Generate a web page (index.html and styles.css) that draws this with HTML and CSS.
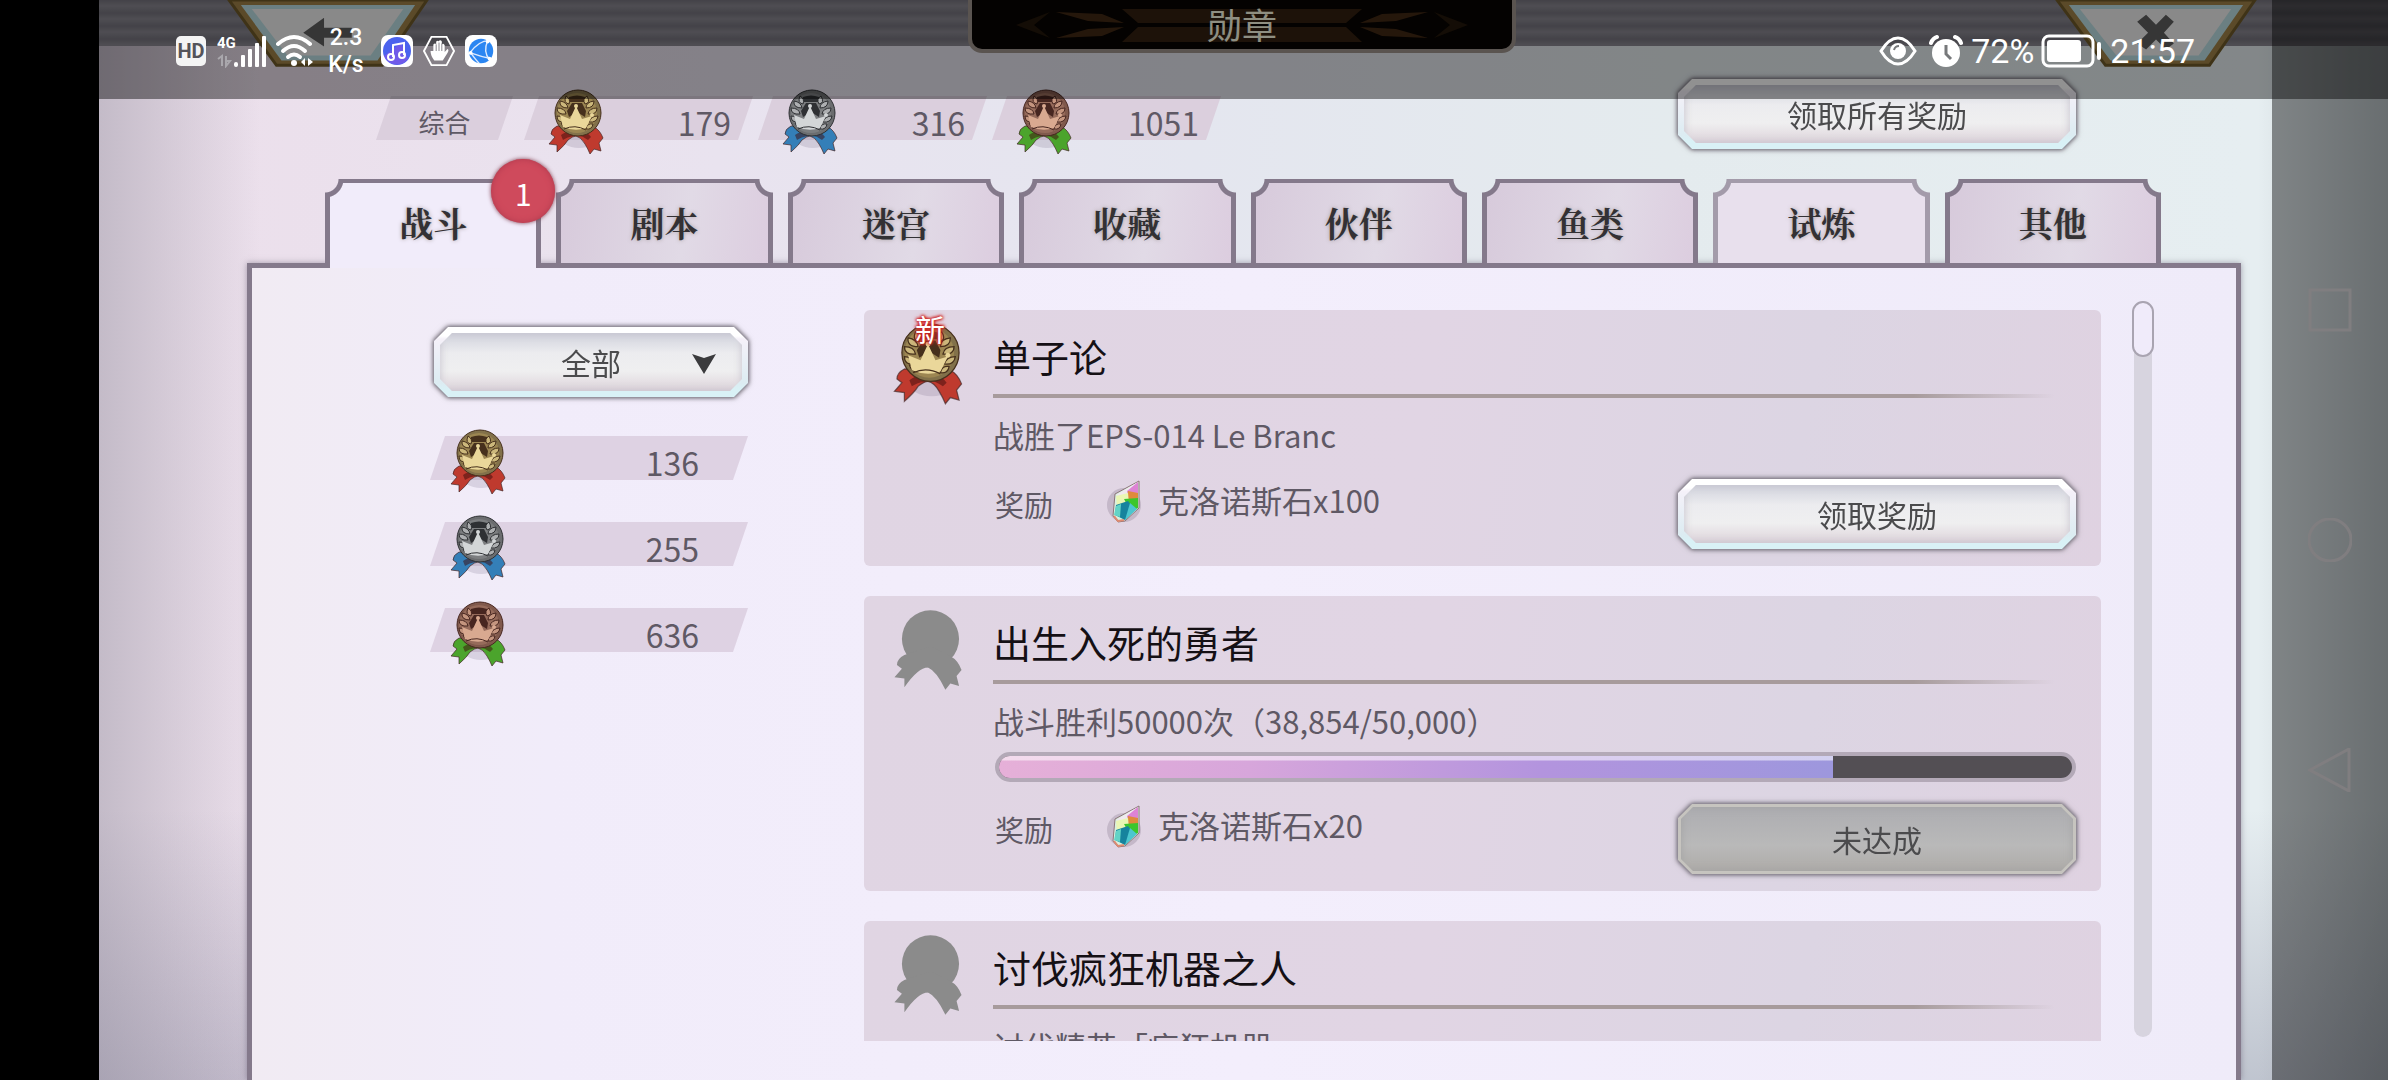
FILE: index.html
```html
<!DOCTYPE html>
<html lang="zh-CN">
<head>
    <meta charset="UTF-8">
    <meta name="viewport" content="width=device-width, initial-scale=1.0">
    <title>勋章</title>
    <link rel="stylesheet" href="styles.css">
</head>
<body>

    <!-- Shared shapes -->
    <svg class="sprite" aria-hidden="true">
        <symbol id="medal" viewBox="0 0 56 66">
            <ellipse cx="31" cy="46" rx="20" ry="13" fill="#5a4a6a" opacity=".16"/>
            <g class="ribbon">
                <path d="M9 37 Q3 40 3 45 L7 48 L1 55 L9 56 L9 63 Q17 56 20 51 Q25 47 28 47 L26 38 Z"/>
                <path d="M30 38 L28 47 Q33 48 37 55 Q40 60 42 65 L46 60 L53 62 L51 54 L55 49 Q52 41 46 38 Z"/>
            </g>
            <path class="fold" d="M13 46 Q21 40 27 44 L26 47 Q19 48 15 51 Z M31 43 Q39 42 43 48 L40 51 Q35 47 29 46 Z"/>
            <circle class="rim" cx="30" cy="24" r="23"/>
            <circle class="face" cx="29" cy="24" r="20"/>
            <path class="dark" d="M21 8 Q29 5 37 8 V13 H21 Z M24 14 H34 L38 22 L37 28 L29 23 L21 28 L19 22 Z"/>
            <path class="leaf" d="M18 7 q5 3 3 8 q-6 -1 -3 -8z M12 12 q7 1 8 7 q-9 0 -8 -7z M9 19 q8 0 9 6 q-9 1 -9 -6z M9 27 q6 0 8 6 q-8 1 -8 -6z M13 34 q6 -1 8 5 q-6 1 -8 -5z M39 7 q-5 3 -2 8 q6 -1 2 -8z M46 12 q-8 1 -8 7 q8 0 8 -7z M49 19 q-8 0 -9 6 q9 1 9 -6z M50 27 q-7 0 -9 6 q8 1 9 -6z M45 35 q-6 -1 -7 5 q6 1 7 -5z"/>
            <path class="crown" d="M15 38 L12 26 L22 30 L28 17 L34 30 L44 27 L38 39 Q27 43 15 38 Z"/>
            <circle class="crown" cx="28" cy="17" r="2"/>
            <circle class="crown" cx="44" cy="26" r="2"/>
            <path class="line" d="M16 40 Q27 35 38 41"/>
        </symbol>
        <symbol id="medal-off" viewBox="0 0 56 66">
            <circle cx="30" cy="24" r="23"/>
            <path d="M9 37 Q3 40 3 45 L7 48 L1 55 L9 56 L9 63 Q20 47 28 47 Q35 50 42 65 L46 60 L53 62 L51 54 L55 49 Q52 41 46 38 L30 30 Z"/>
        </symbol>
        <symbol id="crystal" viewBox="0 0 36 46">
            <ellipse cx="17" cy="26" rx="17" ry="17" fill="#57465f" opacity=".2"/>
            <path d="M32 2 L8 15 L6 37 L11 43 L18 42 L32 29 Z" fill="#d8f0e0" stroke="#8d7479" stroke-width="1"/>
            <path d="M31 3 L9 16 L20 20 Z" fill="#f0e8ef"/>
            <path d="M31 3 L20 12 L22 19 L31 18 Z" fill="#dd83d4"/>
            <path d="M21 12 L31 14 L31 21 L20 22 Z" fill="#e08a3c"/>
            <path d="M9 17 L21 14 L22 24 L10 28 Z" fill="#eaf6b4"/>
            <path d="M17 20 L31 19 L31 29 L24 33 Z" fill="#3cc62c"/>
            <path d="M9 26 L21 22 L28 31 L18 41 L8 36 Z" fill="#16839d"/>
            <path d="M9 27 L14 25 L13 38 L7 36 Z" fill="#62d3c6"/>
            <path d="M23 24 L30 30 L18 41 Z" fill="#4cc6cf"/>
            <path d="M7 37 L11 42 L17 41" fill="none" stroke="#df8a70" stroke-width="2"/>
        </symbol>
    </svg>

    <div class="screen">
        <div class="bezel"></div>

        <main class="game">
            <header class="topbar">
                <button class="corner-button" aria-label="返回">
                    <svg viewBox="0 0 204 70">
                        <path d="M2 0 H202 L157 66 H50 Z" fill="#a08348" stroke="#705a2a" stroke-width="3"/>
                        <path d="M14 5 H190 L152 61 H55 Z" fill="#bde0e4"/>
                        <path d="M25 9 H178 L145 56 H61 Z" fill="#f1f1f1"/>
                        <path d="M77 33 L98 18 V28 H126 V38 H98 V47 Z" fill="#606060"/>
                    </svg>
                </button>
                <div class="title-plate">
                    <svg class="plate-art" viewBox="0 0 540 48" preserveAspectRatio="none">
                        <g fill="#51321a">
                            <path d="M150 9 H390 L374 23 H166 Z M166 27 H374 L390 42 H150 Z" opacity=".6"/>
                            <path d="M84 12 L130 14 L152 23 L116 21 Z M84 38 L130 36 L152 27 L116 29 Z" opacity=".8"/>
                            <path d="M456 12 L410 14 L388 23 L424 21 Z M456 38 L410 36 L388 27 L424 29 Z" opacity=".8"/>
                            <path d="M44 25 L78 12 L62 25 L78 38 Z M496 25 L462 12 L478 25 L462 38 Z" opacity=".4"/>
                        </g>
                    </svg>
                    <h1>勋章</h1>
                </div>
                <button class="corner-button" aria-label="关闭">
                    <svg viewBox="0 0 204 70">
                        <path d="M2 0 H202 L156 66 H51 Z" fill="#a08348" stroke="#705a2a" stroke-width="3"/>
                        <path d="M14 5 H190 L151 61 H56 Z" fill="#bde0e4"/>
                        <path d="M25 9 H178 L145 56 H62 Z" fill="#f1f1f1"/>
                        <path d="M83 22 L92 15 L102 25 L112 15 L120 22 L110 33 L120 44 L112 50 L102 40 L92 50 L83 44 L94 33 Z" fill="#606060"/>
                    </svg>
                </button>
            </header>

            <section class="totals">
                <div class="slab slab-label">综合</div>
                <div class="slab"><svg class="medal gold"><use href="#medal"/></svg><span>179</span></div>
                <div class="slab"><svg class="medal silver"><use href="#medal"/></svg><span>316</span></div>
                <div class="slab"><svg class="medal bronze"><use href="#medal"/></svg><span>1051</span></div>
                <button class="gem-button claim-all">领取所有奖励</button>
            </section>

            <nav class="tabs">
                <button class="tab active">战斗<span class="badge">1</span></button>
                <button class="tab">剧本</button>
                <button class="tab">迷宫</button>
                <button class="tab">收藏</button>
                <button class="tab">伙伴</button>
                <button class="tab">鱼类</button>
                <button class="tab light">试炼</button>
                <button class="tab">其他</button>
            </nav>

            <section class="panel">
                <aside class="filters">
                    <div class="gem-button select-wrap">
                        <select aria-label="筛选">
                            <option>全部</option>
                        </select>
                        <svg class="arrow" viewBox="0 0 24 20"><path d="M0 0 L12 4 L24 0 L12 20 Z" fill="#3b3b3d"/></svg>
                    </div>
                    <div class="counts">
                        <div class="slab"><svg class="medal gold"><use href="#medal"/></svg><span>136</span></div>
                        <div class="slab"><svg class="medal silver"><use href="#medal"/></svg><span>255</span></div>
                        <div class="slab"><svg class="medal bronze"><use href="#medal"/></svg><span>636</span></div>
                    </div>
                </aside>

                <div class="list">
                    <article class="card">
                        <div class="card-icon">
                            <svg class="medal gold"><use href="#medal"/></svg>
                            <span class="new">新</span>
                        </div>
                        <div class="card-body">
                            <h2>单子论</h2>
                            <p>战胜了EPS-014 Le Branc</p>
                            <div class="reward">
                                <span class="reward-label">奖励</span>
                                <svg class="crystal"><use href="#crystal"/></svg>
                                <span class="reward-name">克洛诺斯石x100</span>
                                <button class="gem-button">领取奖励</button>
                            </div>
                        </div>
                    </article>

                    <article class="card">
                        <div class="card-icon">
                            <svg class="medal off"><use href="#medal-off"/></svg>
                        </div>
                        <div class="card-body">
                            <h2>出生入死的勇者</h2>
                            <p>战斗胜利50000次（38,854/50,000）</p>
                            <div class="bar" role="progressbar" aria-label="战斗胜利" aria-valuenow="38854" aria-valuemax="50000">
                                <div class="bar-fill" style="width: 77.7%"></div>
                            </div>
                            <div class="reward">
                                <span class="reward-label">奖励</span>
                                <svg class="crystal"><use href="#crystal"/></svg>
                                <span class="reward-name">克洛诺斯石x20</span>
                                <button class="gem-button locked" disabled>未达成</button>
                            </div>
                        </div>
                    </article>

                    <article class="card">
                        <div class="card-icon">
                            <svg class="medal off"><use href="#medal-off"/></svg>
                        </div>
                        <div class="card-body">
                            <h2>讨伐疯狂机器之人</h2>
                            <p>讨伐精英「疯狂机器」</p>
                        </div>
                    </article>
                </div>

                <div class="scroll-track"><div class="scroll-thumb"></div></div>
            </section>
        </main>

        <nav class="navbar">
            <button aria-label="最近任务"><svg viewBox="0 0 44 44"><rect x="2" y="2" width="40" height="40"/></svg></button>
            <button aria-label="主屏幕"><svg viewBox="0 0 44 44"><circle cx="22" cy="22" r="21"/></svg></button>
            <button aria-label="返回"><svg viewBox="0 0 44 44"><path d="M2 22 L41 1 V43 Z"/></svg></button>
        </nav>

        <div class="statusbar">
            <div class="status-left">
                <span class="hd">HD</span>
                <svg class="signal" viewBox="0 0 50 34">
                    <g fill="#fff">
                        <rect x="17" y="28" width="4" height="5" rx="2"/>
                        <rect x="24" y="21" width="4" height="12" rx="1"/>
                        <rect x="31" y="15" width="4" height="18" rx="1"/>
                        <rect x="38" y="9" width="4" height="24" rx="1"/>
                        <rect x="45" y="2" width="4" height="31" rx="1"/>
                    </g>
                    <path d="M1 25 L5 22 V32 M9 22 V32 L13 27 H9" fill="none" stroke="#a9a7ac" stroke-width="2"/>
                    <text x="0" y="14">4G</text>
                </svg>
                <svg class="wifi" viewBox="0 0 38 34">
                    <g fill="none" stroke="#fff" stroke-width="4" stroke-linecap="round">
                        <path d="M2 10 Q18 -4 34 10"/>
                        <path d="M7 17 Q18 7 29 17"/>
                        <path d="M12 23 Q18 18 24 23"/>
                    </g>
                    <circle cx="18" cy="29" r="3" fill="#fff"/>
                    <path d="M25 28 L29 24 V32 Z M32 24 L37 28 L32 32 Z" fill="#fff"/>
                </svg>
                <span class="speed">2.3<br>K/s</span>
                <svg class="app" viewBox="0 0 32 32">
                    <rect width="32" height="32" rx="7" fill="#fff"/>
                    <circle cx="16" cy="16" r="14" fill="#4a63ee"/>
                    <path d="M3 21 A14 14 0 0 0 27 24 L20 8 Z" fill="#8b55e6" opacity=".6"/>
                    <path d="M12 22 V10 L23 8 V20" fill="none" stroke="#fff" stroke-width="2"/>
                    <circle cx="10" cy="22" r="3" fill="none" stroke="#fff" stroke-width="2"/>
                    <circle cx="21" cy="20" r="3" fill="none" stroke="#fff" stroke-width="2"/>
                </svg>
                <svg class="app" viewBox="0 0 34 34">
                    <path d="M9 2 H25 L33 17 L25 32 H9 L1 17 Z" fill="none" stroke="#fff" stroke-width="2"/>
                    <path d="M12 27 Q8 22 8 17 L11 17 V10 Q13 8 14 10 V7 Q16 5 17 7 V6 Q19 5 20 7 V10 Q22 8 23 11 V18 L26 15 Q28 16 26 19 L21 27 Z" fill="#fff"/>
                    <path d="M14 10 V17 M17 8 V17 M20 9 V17" stroke="#828086" stroke-width="1"/>
                </svg>
                <svg class="app" viewBox="0 0 34 34">
                    <rect width="34" height="34" rx="8" fill="#fff"/>
                    <circle cx="17" cy="17" r="13" fill="#2b86f2"/>
                    <path d="M5 19 Q15 6 25 6 M6 19 Q17 23 27 25 M24 6 Q19 18 26 26 M6 19 Q12 27 15 30" fill="none" stroke="#dceaff" stroke-width="1.5"/>
                    <circle cx="24" cy="7" r="2" fill="#fff"/><circle cx="6" cy="19" r="2" fill="#fff"/><circle cx="26" cy="25" r="2" fill="#fff"/>
                </svg>
            </div>
            <div class="status-right">
                <svg class="eye" viewBox="0 0 38 30">
                    <path d="M2 15 Q10 2 19 2 Q28 2 36 15 Q28 28 19 28 Q10 28 2 15 Z" fill="none" stroke="#fff" stroke-width="3"/>
                    <circle cx="19" cy="15" r="8" fill="#fff"/>
                    <path d="M15 14 Q16 10 20 10" fill="none" stroke="#77797b" stroke-width="2"/>
                </svg>
                <svg class="alarm" viewBox="0 0 34 34">
                    <circle cx="17" cy="19" r="14" fill="#fff"/>
                    <path d="M2 9 Q4 4 8 3 M32 9 Q30 4 26 3" fill="none" stroke="#fff" stroke-width="4" stroke-linecap="round"/>
                    <path d="M17 11 V20 L22 25" fill="none" stroke="#77797b" stroke-width="3"/>
                </svg>
                <span>72%</span>
                <svg class="battery" viewBox="0 0 60 34">
                    <rect x="2" y="2" width="50" height="30" rx="6" fill="none" stroke="#fff" stroke-width="3"/>
                    <rect x="6" y="6" width="34" height="22" rx="3" fill="#fff"/>
                    <rect x="56" y="8" width="4" height="18" rx="2" fill="#fff"/>
                </svg>
                <span>21:57</span>
            </div>
        </div>
    </div>

</body>
</html>
```

FILE: styles.css
```css
* {
    box-sizing: border-box;
}

body {
    margin: 0;
    background-color: #000;
    color: #5f5965;
    font-family: "Noto Sans CJK SC", sans-serif;
    overflow: hidden;
}

button,
select {
    border: none;
    padding: 0;
    background: none;
    color: inherit;
    font: inherit;
    cursor: pointer;
}

h1, h2, p {
    margin: 0;
    font-weight: 400;
}

.sprite {
    position: absolute;
    width: 0;
    height: 0;
}

.screen {
    position: relative;
    display: grid;
    grid-template-columns: 99px 1fr 116px;
    height: 100vh;
    background:
        linear-gradient(to right, rgba(120, 120, 135, 0.35) 99px, rgba(120, 120, 135, 0) 260px),
        linear-gradient(to left, rgba(80, 90, 95, 0.3), rgba(80, 90, 95, 0) 130px),
        linear-gradient(to bottom, rgba(120, 120, 145, 0) 75%, rgba(120, 120, 145, 0.35)),
        linear-gradient(to right, #ecdfeb 6%, #e9e3ef 30%, #e4e6ef 50%, #e4ebee 70%, #e6eef1 94%);
}

.bezel {
    background-color: #000;
}

.game {
    display: flex;
    flex-direction: column;
    min-width: 0;
    min-height: 0;
}

/* Header */
.topbar {
    display: flex;
    justify-content: space-between;
    align-items: flex-start;
    height: 46px;
    margin-right: -116px;
    padding: 0 131px 0 128px;
    background: repeating-linear-gradient(to bottom, #77757f 0, #8b8992 6px, #77757f 13px);
}

.corner-button {
    width: 202px;
}

.corner-button svg {
    display: block;
    width: 100%;
}

.title-plate {
    display: grid;
    width: 548px;
    height: 53px;
    border: 4px solid #9f958e;
    border-top: none;
    border-radius: 0 0 14px 14px;
    background-color: #080502;
}

.plate-art,
.title-plate h1 {
    grid-area: 1 / 1;
    width: 100%;
}

.plate-art {
    height: 48px;
}

.title-plate h1 {
    color: #fbfce4;
    font-size: 35px;
    line-height: 48px;
    text-align: center;
}

/* Medals */
.medal {
    flex: none;
    width: 56px;
    height: 66px;
    fill: #8b8b8b;
}

.fold { fill: rgba(60, 10, 10, 0.5); }
.ribbon { fill: var(--ribbon); stroke: rgba(70, 40, 40, 0.7); stroke-width: 1px; }
.rim { fill: var(--rim); stroke: var(--dark); stroke-width: 1px; }
.face { fill: var(--mid); }
.dark { fill: var(--dark); }
.leaf { fill: var(--light); stroke: var(--dark); stroke-width: 1px; }
.crown { fill: var(--shine); }
.line { fill: none; stroke: var(--dark); stroke-width: 1px; }

.gold {
    --ribbon: #bf3a2e;
    --rim: #82714a;
    --mid: #9c8652;
    --dark: #46301c;
    --light: #ccb87c;
    --shine: #ead79a;
}

.silver {
    --ribbon: #347fb8;
    --rim: #6b6d6f;
    --mid: #7c7e80;
    --dark: #2e3033;
    --light: #adafb1;
    --shine: #d3d6d7;
}

.bronze {
    --ribbon: #4ba42c;
    --rim: #80594c;
    --mid: #966b5b;
    --dark: #472620;
    --light: #c4957f;
    --shine: #d9a990;
}

/* Slanted counters */
.slab {
    position: relative;
    isolation: isolate;
    display: flex;
    justify-content: space-between;
    align-items: center;
    width: 229px;
    height: 44px;
    padding: 0 22px 0 24px;
    font-size: 32px;
}

.slab::before {
    content: "";
    position: absolute;
    inset: 0;
    z-index: -1;
    background-color: #dbcfdd;
    clip-path: polygon(15px 0, 100% 0, calc(100% - 15px) 100%, 0 100%);
}

.slab .medal {
    margin-top: 8px;
}

.slab span {
    padding-top: 7px;
}

.slab-label {
    justify-content: center;
    width: 137px;
    margin-right: 6px;
    padding: 6px 0 0;
    font-size: 26px;
}

.totals {
    display: flex;
    align-items: flex-end;
    gap: 5px;
    margin-top: 33px;
    padding: 0 196px 0 277px;
}

.totals .slab {
    margin-bottom: 9px;
}

.claim-all {
    margin-left: auto;
}

/* Bevelled buttons */
.gem-button {
    position: relative;
    isolation: isolate;
    width: 398px;
    height: 70px;
    color: #4b4b4d;
    font-size: 30px;
    filter: drop-shadow(0 0 2px #77727c) drop-shadow(0 0 2px #77727c);
}

.gem-button::before,
.gem-button::after {
    content: "";
    position: absolute;
    z-index: -1;
}

.gem-button::before {
    inset: 0;
    background: linear-gradient(to bottom, #fff 9px, #f5f1f9 12px, #dcecf2 56px, #d9f1f6 62px);
    clip-path: polygon(14px 0, calc(100% - 14px) 0, 100% 14px, 100% calc(100% - 14px), calc(100% - 14px) 100%, 14px 100%, 0 calc(100% - 14px), 0 14px);
}

.gem-button::after {
    inset: 6px;
    background: linear-gradient(to bottom, #d0d2dc, #ececef 20px, #efeff0 38px, #ddd3da);
    box-shadow: inset 0 0 9px #c4c0cb;
    clip-path: polygon(12px 0, calc(100% - 12px) 0, 100% 12px, 100% calc(100% - 12px), calc(100% - 12px) 100%, 12px 100%, 0 calc(100% - 12px), 0 12px);
}

.gem-button.locked::before {
    background: #c6c4bf;
}

.gem-button.locked::after {
    inset: 3px;
    background: linear-gradient(to bottom, #adadb1, #b9b9b9 60%, #aeaba8);
    box-shadow: inset 0 0 8px #a3a3a3;
}

/* Tabs */
.tabs {
    display: grid;
    grid-template-columns: repeat(8, 1fr);
    gap: 15px;
    margin: 30px 111px 0 226px;
}

.tab {
    position: relative;
    isolation: isolate;
    height: 84px;
    padding-top: 2px;
    color: #333134;
    font-family: "Noto Serif CJK SC", "Noto Sans CJK SC", serif;
    font-size: 34px;
    font-weight: 700;
    text-shadow: 0 0 4px #a79fa0;
    --tab-fill: linear-gradient(100deg, #d7cadb, #e1dae6 60%, #dccddf);
    --tab-line: #84798b;
}

.tab::before,
.tab::after {
    content: "";
    position: absolute;
    mask-composite: intersect;
}

.tab::before {
    inset: 0;
    z-index: -2;
    background: var(--tab-line);
    mask-image:
        radial-gradient(circle at 0 0, transparent 13px, #000 14px),
        radial-gradient(circle at 100% 0, transparent 13px, #000 14px);
}

.tab::after {
    inset: 4px 5px 0;
    z-index: -1;
    background: var(--tab-fill);
    mask-image:
        radial-gradient(circle at -5px -4px, transparent 18px, #000 19px),
        radial-gradient(circle at calc(100% + 5px) -4px, transparent 18px, #000 19px);
}

.tab.light {
    --tab-fill: #e8e0ed;
    --tab-line: #a39baa;
}

.tab.active {
    z-index: 1;
    --tab-fill: #f1ecfa;
}

.tab.active::after {
    bottom: -5px;
}

.badge {
    position: absolute;
    top: -20px;
    right: -14px;
    width: 64px;
    height: 64px;
    border-radius: 50%;
    background-color: #cf4a5c;
    box-shadow: 0 0 4px #7d3a4a, inset 0 0 6px #b13a4e;
    color: #fff;
    font-family: "Noto Sans CJK SC", sans-serif;
    font-size: 30px;
    font-weight: 400;
    line-height: 68px;
    text-shadow: none;
}

/* Panel */
.panel {
    flex: 1;
    display: flex;
    min-height: 0;
    margin: 0 31px 0 148px;
    padding: 0 82px 39px 178px;
    border: 5px solid #84798b;
    border-bottom: none;
    background: linear-gradient(to right, #f1ebf3, #f1ecfa 15%, #f3eefc 50%, #efebf9);
    box-shadow: 0 0 6px rgba(90, 80, 100, 0.5);
}

.filters {
    width: 318px;
    margin-right: 116px;
    padding-top: 59px;
}

.select-wrap {
    width: 314px;
    margin-left: 4px;
}

.select-wrap select {
    appearance: none;
    width: 100%;
    height: 100%;
    font-size: 30px;
    text-align: center;
    text-align-last: center;
}

.arrow {
    position: absolute;
    top: 27px;
    right: 32px;
    width: 24px;
    height: 20px;
    pointer-events: none;
}

.counts {
    display: flex;
    flex-direction: column;
    gap: 42px;
    margin-top: 39px;
}

.counts .slab {
    width: 318px;
    padding: 0 49px 0 20px;
}

.counts .slab::before {
    background-color: #ded2e3;
}

/* Medal list */
.list {
    flex: 1;
    display: flex;
    flex-direction: column;
    gap: 30px;
    margin-top: 42px;
    overflow: hidden;
}

.card {
    flex: none;
    display: flex;
    padding: 17px 25px 17px 29px;
    border-radius: 6px;
    background: linear-gradient(100deg, #e0d5e3, #e1d5e4 45%, #dcd5e3 75%, #dfd2e1);
}

.card-icon {
    position: relative;
    flex: none;
    width: 100px;
}

.card-icon .medal {
    display: block;
    width: 70px;
    height: 82px;
    margin-top: -4px;
}

.new {
    position: absolute;
    top: -17px;
    left: 22px;
    color: #fff;
    font-size: 30px;
    line-height: 36px;
    text-shadow: 0 0 3px #c22, 0 0 3px #c22, 0 0 3px #c22, 0 0 5px #d44;
}

.card-body {
    flex: 1;
}

.card h2 {
    height: 71px;
    background: linear-gradient(to right, #a79b9c 85%, rgba(167, 155, 156, 0) 98%) bottom / 100% 4px no-repeat;
    color: #151015;
    font-size: 38px;
    line-height: 58px;
}

.card p {
    margin-top: 15px;
    font-size: 31px;
    line-height: 44px;
}

.bar {
    height: 30px;
    margin: 9px 0 0 2px;
    border: 4px solid #b3a9b7;
    border-radius: 15px;
    background-color: #534f54;
    overflow: hidden;
}

.bar-fill {
    height: 100%;
    border-radius: 8px 0 0 8px;
    background:
        linear-gradient(to bottom, rgba(255, 255, 255, 0.55) 4px, rgba(255, 255, 255, 0) 5px),
        linear-gradient(to right, #e6b0d8, #d7a6db 30%, #b394de 65%, #9d97dd);
}

.reward {
    display: flex;
    align-items: flex-start;
    margin-top: 22px;
    font-size: 31px;
    line-height: 42px;
}

.reward-label {
    width: 114px;
    padding: 4px 0 0 2px;
    font-size: 29px;
}

.crystal {
    width: 36px;
    height: 46px;
    margin-right: 15px;
}

.reward .gem-button {
    margin-left: auto;
}

/* Scrollbar */
.scroll-track {
    width: 18px;
    margin: 33px 2px 4px 33px;
    border-radius: 9px;
    background-color: #d7d4df;
}

.scroll-thumb {
    width: 22px;
    height: 56px;
    margin-left: -2px;
    border: 2px solid #a9a4b1;
    border-radius: 11px;
    background-color: #f0ebfa;
}

/* Phone navigation */
.navbar {
    position: relative;
    display: flex;
    flex-direction: column;
    align-items: center;
    justify-content: center;
    gap: 186px;
    background-color: rgba(0, 0, 0, 0.43);
}

.navbar svg {
    display: block;
    width: 44px;
    height: 44px;
    fill: none;
    stroke: #807e80;
    stroke-width: 3px;
}

/* Phone status bar lies over the game */
.statusbar {
    position: absolute;
    top: 0;
    left: 99px;
    right: 0;
    z-index: 5;
    display: flex;
    justify-content: space-between;
    height: 99px;
    padding: 0 193px 0 77px;
    background-color: rgba(0, 0, 0, 0.43);
    color: #fff;
    font-family: Roboto, sans-serif;
    pointer-events: none;
}

.status-left,
.status-right {
    display: flex;
    align-items: center;
    height: 102px;
}

.hd {
    width: 30px;
    height: 30px;
    border-radius: 5px;
    background-color: #f4f4f4;
    color: #55545a;
    font-size: 20px;
    font-weight: 700;
    line-height: 30px;
    text-align: center;
}

.signal {
    width: 50px;
    height: 34px;
    margin: 0 9px 0 11px;
}

.signal text {
    fill: #fff;
    font-size: 15px;
    font-weight: 700;
}

.wifi {
    width: 38px;
    height: 34px;
}

.speed {
    width: 40px;
    margin: 0 15px 0 12px;
    font-size: 23px;
    font-weight: 500;
    line-height: 27px;
    text-align: center;
}

.app {
    width: 32px;
    height: 34px;
    margin-right: 10px;
}

.status-right {
    font-size: 34px;
}

.eye {
    width: 38px;
    height: 30px;
    margin-right: 12px;
}

.alarm {
    width: 34px;
    height: 34px;
    margin-right: 8px;
}

.battery {
    width: 60px;
    height: 34px;
    margin: 0 9px 0 7px;
}
```
